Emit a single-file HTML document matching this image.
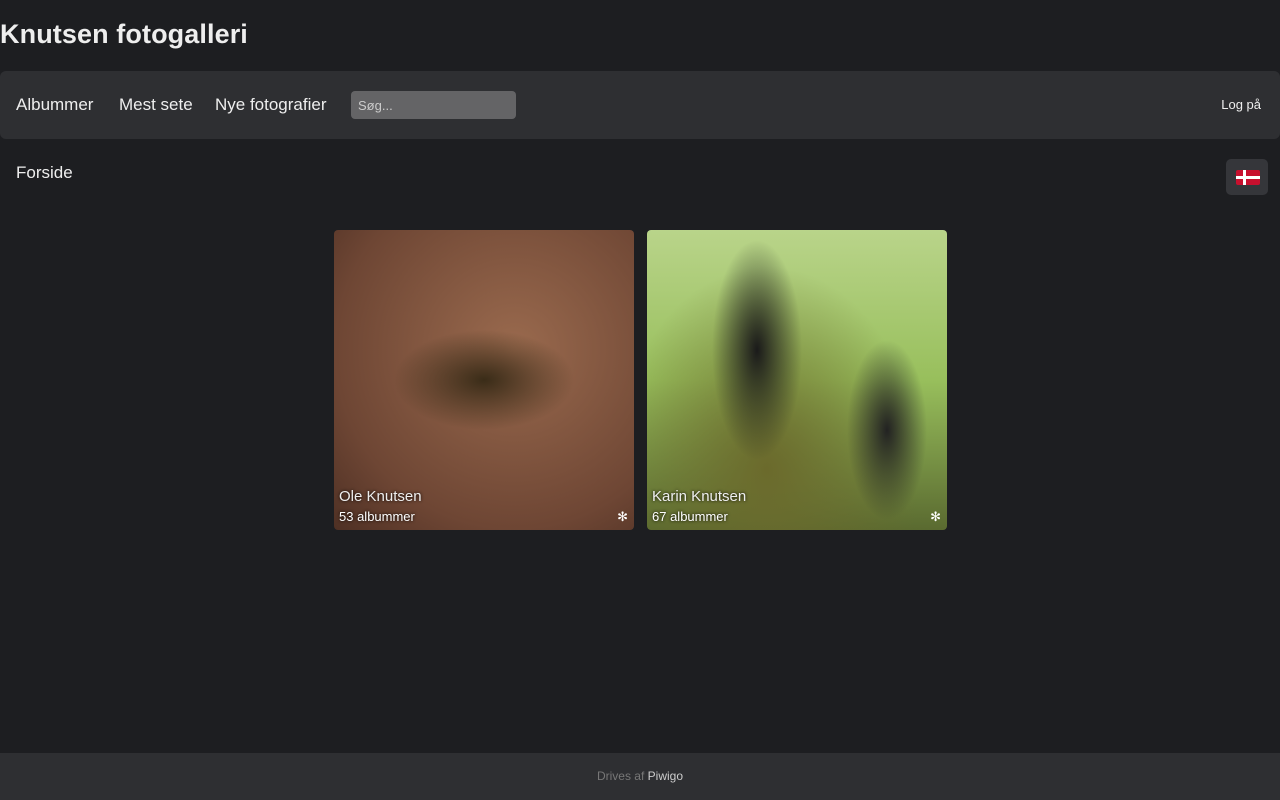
<!DOCTYPE html>
<html><head><meta charset="utf-8">
<style>
*{box-sizing:border-box;margin:0;padding:0}
body{width:1280px;height:800px;background:#1d1e21;font-family:"Liberation Sans",sans-serif;color:#eee;position:relative;overflow:hidden}
h1{position:absolute;left:0;top:19px;font-size:27px;font-weight:bold;color:#eee;letter-spacing:0.1px}
.nav{position:absolute;left:0;top:71px;width:1280px;height:68px;background:#2e2f32;border-radius:6px}
.nav a{position:absolute;top:24px;font-size:17px;color:#eee;text-decoration:none}
.search{position:absolute;left:351px;top:91px;width:165px;height:28px;background:#646466;border-radius:4px;font-size:13px;color:#ccc;padding:7px 7px}
.login{position:absolute;right:19px;top:97px;font-size:13px;color:#eee}
.crumb{position:absolute;left:16px;top:163px;font-size:17px;color:#eee}
.flagbtn{position:absolute;left:1226px;top:159px;width:42px;height:36px;background:#35363a;border-radius:5px}
.flag{position:absolute;left:10px;top:11px;width:24px;height:15px;background:#c8102e;border-radius:2px}
.flag:before{content:"";position:absolute;left:7px;top:0;width:3px;height:15px;background:#fff}
.flag:after{content:"";position:absolute;left:0;top:6px;width:24px;height:3px;background:#fff}
.card{position:absolute;top:230px;width:300px;height:300px;border-radius:4px;overflow:hidden}
.c1{left:334px;background:radial-gradient(ellipse 90px 50px at 150px 150px,#3a2c18,transparent),radial-gradient(ellipse at 60% 40%,#9a6a4e,#6e4634 70%,#4e3024)}
.c2{left:647px;background:radial-gradient(ellipse 45px 110px at 110px 120px,#1a1a1a,transparent),radial-gradient(ellipse 40px 90px at 240px 200px,#222,transparent),radial-gradient(ellipse at 40% 80%,#6b6a2c,transparent 60%),linear-gradient(#b9d48a,#98bf5c 50%,#5a6a30)}
.title{position:absolute;left:5px;bottom:25px;font-size:15px;color:#eee;text-shadow:0 0 3px #000}
.sub{position:absolute;left:5px;bottom:6px;font-size:13px;color:#fff;text-shadow:0 0 3px #000}
.star{position:absolute;right:6px;bottom:5px;font-size:13px;color:#fff}
.foot{position:absolute;left:0;top:753px;width:1280px;height:47px;background:#2e2f32;text-align:center;font-size:12px;color:#777;padding-top:16px}
.foot span{color:#ccc}
</style></head><body>
<h1>Knutsen fotogalleri</h1>
<div class="nav">
<a style="left:16px">Albummer</a>
<a style="left:119px">Mest sete</a>
<a style="left:215px">Nye fotografier</a>
</div>
<div class="search">Søg...</div>
<div class="login">Log på</div>
<div class="crumb">Forside</div>
<div class="flagbtn"><div class="flag"></div></div>
<div class="card c1"><div class="title">Ole Knutsen</div><div class="sub">53 albummer</div><div class="star">✻</div></div>
<div class="card c2"><div class="title">Karin Knutsen</div><div class="sub">67 albummer</div><div class="star">✻</div></div>
<div class="foot">Drives af <span>Piwigo</span></div>
</body></html>
